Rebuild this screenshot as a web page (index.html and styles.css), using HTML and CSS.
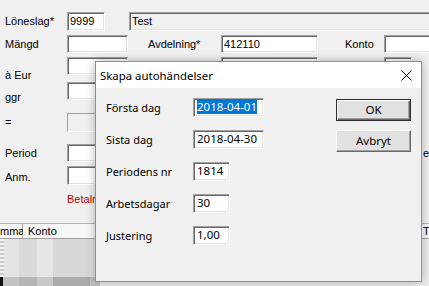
FILE: index.html
```html
<!DOCTYPE html>
<html lang="sv">
<head>
<meta charset="utf-8">
<title>Skapa autohändelser</title>
<link rel="stylesheet" href="styles.css">
</head>
<body>
<div class="form">
  <div class="row r1">
    <span class="lbl">Löneslag*</span>
    <span class="fld w38">9999</span>
    <span class="fld ro test">Test</span>
  </div>
  <div class="row r2">
    <span class="lbl">Mängd</span>
    <span class="fld w61"></span>
    <span class="cap avd">Avdelning*</span>
    <span class="fld w97">412110</span>
    <span class="cap konto">Konto</span>
    <span class="fld w60"></span>
  </div>
  <div class="row r3">
    <span class="lbl l3">à Eur</span>
    <span class="fld w61"></span>
    <span class="fld w97 gap93"></span>
    <span class="fld w28 gap66"></span>
  </div>
  <div class="row r4">
    <span class="lbl l4">ggr</span>
    <span class="fld w61"></span>
  </div>
  <div class="row r5">
    <span class="lbl">=</span>
    <span class="fld dis w61"></span>
  </div>
  <div class="row r6">
    <span class="lbl">Period</span>
    <span class="fld w61"></span>
    <span class="cap tail">e</span>
  </div>
  <div class="row r7">
    <span class="lbl l7">Anm.</span>
    <span class="fld w61"></span>
  </div>
  <div class="betal">Betaln</div>
  <div class="thead">
    <span class="th c1">mma</span>
    <span class="th c2">Konto</span>
    <span class="th c3">T</span>
  </div>
  <div class="tbody">
    <div class="trow ra">
      <span class="cell a0"></span><span class="cell a1"></span><span class="cell a2"></span><span class="cell a3"></span><span class="cell a4"></span><span class="cell a5"></span>
    </div>
    <div class="trow rb">
      <span class="cell b0"></span><span class="cell b1"></span><span class="cell b2"></span><span class="cell b3"></span><span class="cell b4"></span><span class="cell b5"></span>
    </div>
  </div>
</div>

<div class="dlg">
  <div class="dlg-title">
    <span class="dlg-caption">Skapa autohändelser</span>
    <svg class="close" width="11" height="11" viewBox="0 0 11 11"><path d="M0.5 0.5L10.5 10.5M10.5 0.5L0.5 10.5" stroke="#000" stroke-width="1" fill="none"/></svg>
  </div>
  <div class="dlg-body">
    <div class="fields">
      <span class="dl">Första dag</span>
      <span class="inp wide"><span class="sel">2018-04-01</span></span>
      <span class="dl">Sista dag</span>
      <span class="inp wide">2018-04-30</span>
      <span class="dl">Periodens nr</span>
      <span class="inp narrow">1814</span>
      <span class="dl">Arbetsdagar</span>
      <span class="inp narrow">30</span>
      <span class="dl">Justering</span>
      <span class="inp narrow">1,00</span>
    </div>
    <div class="buttons">
      <span class="btn def">OK</span>
      <span class="btn">Avbryt</span>
    </div>
  </div>
</div>
</body>
</html>
```

FILE: styles.css
```css
* { box-sizing: border-box; }
html, body { margin: 0; padding: 0; }
body {
  width: 429px;
  height: 286px;
  overflow: hidden;
  position: relative;
  background: #f0f0f0;
  font-family: "Liberation Sans", Arial, sans-serif;
  font-size: 11px;
  color: #000;
}

/* background form */
.form { padding-top: 12px; display: flex; flex-direction: column; width: 429px; }
.row { display: flex; align-items: flex-start; white-space: nowrap; flex: none; }
.r1 { height: 19px; line-height: 19px; }
.r2 { height: 18px; line-height: 18px; margin-top: 4px; }
.r3 { height: 18px; line-height: 18px; margin-top: 4px; }
.r4 { height: 18px; line-height: 18px; margin-top: 7px; }
.r5 { height: 19px; line-height: 19px; margin-top: 13px; }
.r6 { height: 18px; line-height: 18px; margin-top: 12px; }
.r7 { height: 19px; line-height: 19px; margin-top: 4px; }

.lbl { width: 67px; padding-left: 5px; flex: none; }
.l3 { margin-top: 9px; }
.l4 { margin-top: 6px; }
.l7 { margin-top: 2px; }

.fld {
  flex: none;
  height: 100%;
  background: #fff;
  border: 1px solid;
  border-color: #a0a0a0 #ffffff #ffffff #a0a0a0;
  box-shadow: inset 1px 1px #696969, inset -1px -1px #e3e3e3;
  padding-left: 2px;
  line-height: 16px;
}
.r1 .fld, .r5 .fld, .r7 .fld { line-height: 17px; }
.fld.ro { background: #f0f0f0; }
.fld.dis { background: #f0f0f0; box-shadow: none; }
.w38 { width: 38px; }
.w61 { width: 61px; }
.w97 { width: 97px; }
.w60 { width: 60px; }
.w28 { width: 28px; }
.test { width: 310px; margin-left: 24px; }
.gap93 { margin-left: 93px; }
.gap66 { margin-left: 66px; }
.cap { flex: none; }
.avd { width: 73px; margin-left: 20px; }
.konto { width: 39px; margin-left: 27px; }
.tail { margin-left: 295px; }

.betal {
  margin-top: 8px;
  padding-left: 67px;
  line-height: 13px;
  height: 13px;
  color: #c80000;
  white-space: nowrap;
}

.thead {
  margin-top: 17px;
  height: 16px;
  display: flex;
  background: #f7f7f7;
  border-top: 1px solid #b4b4b4;
  border-bottom: 1px solid #a0a0a0;
  line-height: 14px;
  white-space: nowrap;
}
.th { flex: none; height: 100%; border-right: 1px solid #a0a0a0; box-shadow: inset 1px 0 #ffffff; }
.c1 { width: 23px; }
.c2 { width: 399px; padding-left: 5px; }
.c3 { width: 20px; padding-left: 1px; }

.tbody { display: flex; flex-direction: column; background: #ececec; }
.trow { display: flex; }
.ra { height: 38px; }
.rb { height: 9px; }
.cell { flex: none; height: 100%; }
.a0 { width: 4px; background: repeating-linear-gradient(#f4f4f4 0 2px, #c8c8c8 2px 4px); }
.a1 { width: 15px; background: #e4e4e4; }
.a2 { width: 18px; background: #dadada; }
.a3 { width: 16px; background: #e6e6e6; }
.a4 { width: 37px; background: #d8d8d8; }
.a5 { width: 10px; background: #e0e0e0; }
.b0 { width: 3px; background: #111; }
.b1 { width: 16px; background: #c2c2c2; }
.b2 { width: 18px; background: #b6b6b6; }
.b3 { width: 16px; background: #c8c8c8; }
.b4 { width: 37px; background: #ababab; }
.b5 { width: 10px; background: #c0c0c0; }

/* dialog */
.dlg {
  position: absolute;
  left: 95px;
  top: 61px;
  width: 327px;
  height: 221px;
  background: #f0f0f0;
  border: 1px solid #5b9bd5;
  box-shadow: 0 0 9px rgba(0, 0, 0, 0.28);
  font-family: "Noto Sans", "Liberation Sans", sans-serif;
  font-size: 11px;
  display: flex;
  flex-direction: column;
}
.dlg-title {
  height: 26px;
  background: #fff;
  display: flex;
  align-items: center;
  padding-left: 4px;
  flex: none;
}
.dlg-caption { font-size: 11.4px; }
.close { margin-left: auto; margin-right: 9px; display: block; }

.dlg-body {
  display: flex;
  padding: 10px 10px 0 10px;
}
.fields {
  display: grid;
  grid-template-columns: 87px auto;
  grid-auto-rows: 19px;
  row-gap: 13px;
  align-items: center;
}
.dl { line-height: 19px; white-space: nowrap; }
.inp {
  height: 19px;
  background: #fff;
  border: 1px solid;
  border-color: #a0a0a0 #ffffff #ffffff #a0a0a0;
  box-shadow: inset 1px 1px #696969, inset -1px -1px #e3e3e3;
  padding-left: 3px;
  line-height: 16px;
  white-space: nowrap;
  font-size: 11.5px;
}
.wide { width: 71px; }
.narrow { width: 37px; }
.sel { background: #0078d7; color: #fff; }

.buttons {
  margin-left: auto;
  margin-top: 1px;
  display: flex;
  flex-direction: column;
  gap: 9px;
}
.btn {
  width: 75px;
  height: 22px;
  background: #e1e1e1;
  text-align: center;
  line-height: 19px;
  font-size: 11.5px;
  border: 1px solid;
  border-color: #ffffff #696969 #696969 #ffffff;
  box-shadow: inset -1px -1px #a0a0a0;
}
.btn.def {
  border: 1px solid #2b2b2b;
  box-shadow: inset 1px 1px #ffffff, inset -1px -1px #696969, inset -2px -2px #a0a0a0;
}
```
